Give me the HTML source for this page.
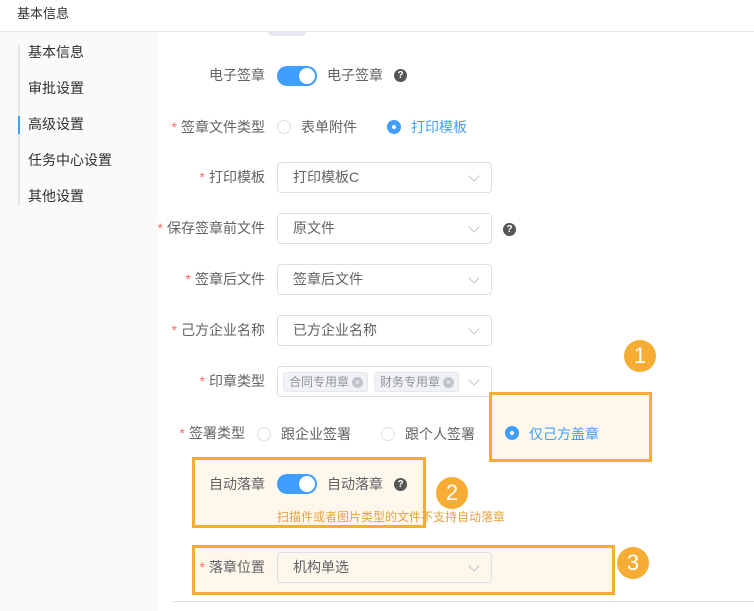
<!DOCTYPE html>
<html><head><meta charset="utf-8"><style>
*{margin:0;padding:0;box-sizing:border-box}
body{width:754px;height:611px;overflow:hidden;background:#fff;font-family:"Liberation Sans","Noto Sans CJK SC",sans-serif;font-size:14px;color:#606266;position:relative}
.a{position:absolute;white-space:nowrap}
.lbl{position:absolute;right:489px;line-height:20px;text-align:right;white-space:nowrap}
.st{color:#f56c6c;margin-right:4px}
.inp{position:absolute;left:277px;width:215px;height:31px;border:1px solid #dcdfe6;border-radius:4px;background:#fff;padding-left:15px;line-height:29px;color:#606266}
.inp:after{content:"";position:absolute;right:13px;top:9px;width:7px;height:7px;border-right:1px solid #c0c4cc;border-bottom:1px solid #c0c4cc;transform:rotate(45deg)}
.q{position:absolute;width:13px;height:13px;border-radius:50%;background:#555;color:#fff;font-size:10px;font-weight:bold;text-align:center;line-height:13px}
.radio{position:absolute;width:14px;height:14px;border:1px solid #dcdfe6;border-radius:50%;background:#fff}
.radio.on{border:none;background:#409eff}
.radio.on:after{content:"";position:absolute;left:5px;top:5px;width:4px;height:4px;border-radius:50%;background:#fff}
.sw{position:absolute;width:40px;height:20px;border-radius:10px;background:#409eff}
.sw:after{content:"";position:absolute;right:2px;top:2px;width:16px;height:16px;border-radius:50%;background:#fff}
.box{position:absolute;border:3px solid #f7ac33;background:#fef7ec}
.num{position:absolute;width:32px;height:32px;border-radius:50%;background:#f7ac33;color:#fff;font-size:22px;text-align:center;line-height:32px}
.tag{position:absolute;top:372px;height:20px;background:#f0f2f5;border:1px solid #e4e7ed;border-radius:3px;font-size:12px;color:#909399;line-height:18px;padding-left:5px}
.tag i{position:absolute;right:4px;top:4px;width:11px;height:11px;border-radius:50%;background:#c0c4cc;color:#fff;font-size:8px;line-height:11px;text-align:center;font-style:normal}
</style></head><body>
<div class="a" style="left:0;top:0;width:754px;height:32px;border-bottom:1px solid #e6e6e6"></div>
<div class="a" style="left:17px;top:3px;font-size:13px;color:#303133">基本信息</div>
<div class="a" style="left:0;top:32px;width:157px;height:579px;background:#fafafa"></div>
<div class="a" style="left:18px;top:45px;width:2px;height:161px;background:#e4e7ed"></div>
<div class="a" style="left:18px;top:116px;width:2px;height:18px;background:#409eff"></div>
<div class="a" style="left:28px;top:42px;color:#303133">基本信息</div>
<div class="a" style="left:28px;top:78px;color:#303133">审批设置</div>
<div class="a" style="left:28px;top:114px;color:#303133">高级设置</div>
<div class="a" style="left:28px;top:150px;color:#303133">任务中心设置</div>
<div class="a" style="left:28px;top:186px;color:#303133">其他设置</div>

<div class="a" style="left:268px;top:32px;width:38px;height:4px;border-radius:0 0 10px 10px;background:#e4e7ed"></div>

<div class="lbl" style="top:65px">电子签章</div>
<div class="sw" style="left:277px;top:66px"></div>
<div class="a" style="left:327px;top:65px;line-height:20px">电子签章</div>
<div class="q" style="left:394px;top:69px">?</div>

<div class="lbl" style="top:117px"><span class="st">*</span>签章文件类型</div>
<div class="radio" style="left:277px;top:120px"></div>
<div class="a" style="left:301px;top:117px;line-height:20px">表单附件</div>
<div class="radio on" style="left:387px;top:120px"></div>
<div class="a" style="left:411px;top:117px;line-height:20px;color:#409eff">打印模板</div>

<div class="lbl" style="top:167px"><span class="st">*</span>打印模板</div>
<div class="inp" style="top:162px">打印模板C</div>
<div class="lbl" style="top:218px"><span class="st">*</span>保存签章前文件</div>
<div class="inp" style="top:213px">原文件</div>
<div class="q" style="left:503px;top:223px">?</div>
<div class="lbl" style="top:269px"><span class="st">*</span>签章后文件</div>
<div class="inp" style="top:264px">签章后文件</div>
<div class="lbl" style="top:320px"><span class="st">*</span>己方企业名称</div>
<div class="inp" style="top:315px">已方企业名称</div>
<div class="lbl" style="top:371px"><span class="st">*</span>印章类型</div>
<div class="inp" style="top:366px"></div>
<div class="tag" style="left:283px;width:85px">合同专用章<i>×</i></div>
<div class="tag" style="left:374px;width:85px">财务专用章<i>×</i></div>

<div class="box" style="left:489px;top:392px;width:163px;height:70px"></div>
<div class="num" style="left:624px;top:340px">1</div>
<div class="lbl" style="top:423px;right:509px"><span class="st">*</span>签署类型</div>
<div class="radio" style="left:257px;top:427px"></div>
<div class="a" style="left:281px;top:424px;line-height:20px">跟企业签署</div>
<div class="radio" style="left:381px;top:427px"></div>
<div class="a" style="left:405px;top:424px;line-height:20px">跟个人签署</div>
<div class="radio on" style="left:505px;top:426px"></div>
<div class="a" style="left:529px;top:424px;line-height:20px;color:#409eff">仅己方盖章</div>

<div class="box" style="left:192px;top:457px;width:234px;height:71px"></div>
<div class="lbl" style="top:474px">自动落章</div>
<div class="sw" style="left:277px;top:474px"></div>
<div class="a" style="left:327px;top:474px;line-height:20px">自动落章</div>
<div class="q" style="left:394px;top:478px">?</div>
<div class="a" style="left:277px;top:508px;font-size:12px;color:#e6a23c">扫描件或者图片类型的文件不支持自动落章</div>
<div class="num" style="left:436px;top:477px">2</div>

<div class="box" style="left:192px;top:545px;width:423px;height:50px"></div>
<div class="lbl" style="top:557px"><span class="st">*</span>落章位置</div>
<div class="inp" style="top:552px;background:#fef7ec">机构单选</div>
<div class="num" style="left:617px;top:547px">3</div>
<div class="a" style="left:173px;top:601px;width:581px;height:1px;background:#dcdfe6"></div>
</body></html>
